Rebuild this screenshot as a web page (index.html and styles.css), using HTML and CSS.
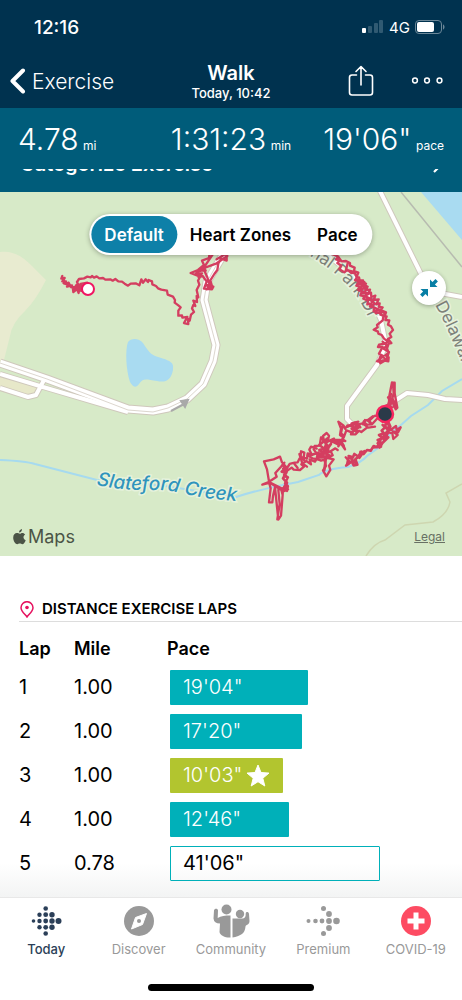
FILE: index.html
```html
<!DOCTYPE html>
<html lang="en">
<head>
    <meta charset="UTF-8">
    <meta name="viewport" content="width=device-width, initial-scale=1.0">
    <title>Exercise - Walk</title>
    <link rel="stylesheet" href="styles.css">
</head>
<body>
    <header class="top">
        <div class="status-bar">
            <span class="time">12:16</span>
            <div class="status-icons">
                <svg width="22" height="14" viewBox="0 0 22 14" aria-hidden="true">
                    <rect x="0" y="8" width="4" height="5" rx="1" fill="#fff"/>
                    <rect x="6" y="6" width="4" height="7" rx="1" fill="#305a72"/>
                    <rect x="12" y="3" width="4" height="10" rx="1" fill="#305a72"/>
                    <rect x="17" y="0" width="4" height="13" rx="1" fill="#305a72"/>
                </svg>
                <span>4G</span>
                <svg width="30" height="14" viewBox="0 0 30 14" aria-hidden="true">
                    <rect x="0.5" y="0.5" width="26" height="13" rx="3.5" fill="none" stroke="#6b8798"/>
                    <rect x="2" y="2" width="17" height="10" rx="2" fill="#fff"/>
                    <path d="M28 4.5c2 .6 2 4.400 0 5z" fill="#6b8798"/>
                </svg>
            </div>
        </div>
        <div class="nav-bar">
            <a class="back" href="#">
                <svg width="16" height="26" viewBox="0 0 16 26" aria-hidden="true"><path d="M13 2.500L2.500 13 13 23.500" fill="none" stroke="#fff" stroke-width="4" stroke-linecap="round" stroke-linejoin="round"/></svg>
                Exercise
            </a>
            <div class="title">
                <h1>Walk</h1>
                <p>Today, 10:42</p>
            </div>
            <div class="actions">
                <button type="button" aria-label="Share">
                    <svg width="26" height="32" viewBox="0 0 26 32"><g fill="none" stroke="#fff" stroke-width="1.600" stroke-linecap="round" stroke-linejoin="round"><path d="M8.500 10H4a2.500 2.500 0 0 0-2.500 2.500v15A2.500 2.500 0 0 0 4 30h18a2.500 2.500 0 0 0 2.500-2.500v-15A2.500 2.500 0 0 0 22 10h-4.500M13 20V2M8 6.500L13 1.500l5 5"/></g></svg>
                </button>
                <button type="button" aria-label="More">
                    <svg width="32" height="8" viewBox="0 0 32 8"><g fill="none" stroke="#fff" stroke-width="1.500"><circle cx="4" cy="3.500" r="2.400"/><circle cx="16" cy="3.500" r="2.400"/><circle cx="28.500" cy="3.500" r="2.400"/></g></svg>
                </button>
            </div>
        </div>
    </header>

    <section class="stats">
        <p>4.78 <small>mi</small></p>
        <p>1:31:23 <small>min</small></p>
        <p>19'06" <small>pace</small></p>
    </section>

    <main>
        <!-- scrolled under the stats bar -->
        <a class="categorize" href="#">
            <span>Categorize Exercise</span>
            <svg width="10" height="16" viewBox="0 0 10 16" aria-hidden="true"><path d="M2 2l6 6-6 6" fill="none" stroke="#fff" stroke-width="2.200"/></svg>
        </a>

        <section class="map">
            <svg class="map-canvas" viewBox="0 0 462 364" preserveAspectRatio="xMidYMid slice" role="img" aria-label="Route map">
                <defs>
                    <path id="creek-label" d="M96 293C140 302 155 295 176 300S215 308 250 310"/>
                    <path id="park-label" d="M272 44Q338 74 359 108T383 184"/>
                    <path id="delaware-label" d="M435 113Q448 134 478 212"/>
                </defs>
                <g transform="translate(0 -192)">
                    <!-- land -->
                    <path d="M0 252C14 250 24 258 32 266L46 280Q36 300 25 311 12 323 10 336L4 360 0 362z" fill="#e8ebd0"/>
                    <path d="M0 372L43 386 36 395 28 397 0 388z" fill="#e7e8c9"/>
                    <path d="M366 556Q374 543 385 540L405 525 433 522Q448 514 450 502L446 493 462 484" fill="none" stroke="#ced6b0" stroke-width="1.500"/>
                    <!-- water -->
                    <path d="M421 192L462 240V192z" fill="#a9dbf1"/>
                    <path d="M128 342C131 338 139 338 143 343 150 354 152 355 158 357 172 361 174 363 173 370 171 380 166 383 157 381 145 379 143 378 139 384 136 388 134 388 130 382 126 370 125 350 128 342z" fill="#a9dbf1"/>
                    <path d="M0 460Q25 461 35 464L97 480 165 486 236 497Q264 488 298 482L319 475Q325 469 348 467 361 463 367 456L378 448Q390 432 401 425L411 416 428 405 442 391 462 379" fill="none" stroke="#a6daef" stroke-width="2"/>
                    <path d="M401 192L462 267" fill="none" stroke="#b7bbb0" stroke-width="1.500"/>
                    <!-- roads -->
                    <g fill="none" stroke="#cfc8bc" stroke-linejoin="round">
                        <path d="M0 363L47 379 128 409 153 411 168 408 187 399 203 384 213 361 216 345 204 300 207 282 226 250" stroke-width="9"/>
                        <path d="M0 374L43 387 128 412M0 388L28 397 36 395 44 380" stroke-width="6"/>
                        <path d="M379 189L422 276M440 293L462 297M320 250Q365 280 381 320L386 345 377 365 347 406 347 419 354 426M390 404L407 393 428 395 445 399 464 400" stroke-width="6"/>
                    </g>
                    <g fill="none" stroke="#fff" stroke-linejoin="round">
                        <path d="M0 363L47 379 128 409 153 411 168 408 187 399 203 384 213 361 216 345 204 300 207 282 226 250" stroke-width="7"/>
                        <path d="M0 374L43 387 128 412M0 388L28 397 36 395 44 380" stroke-width="4"/>
                        <path d="M379 189L422 276M440 293L462 297M320 250Q365 280 381 320L386 345 377 365 347 406 347 419 354 426M390 404L407 393 428 395 445 399 464 400" stroke-width="4"/>
                    </g>
                    <path d="M0 363L47 379 128 410 153 412 168 408 187 399 203 384 213 361 216 345 204 300 207 282 222 255" fill="none" stroke="#dcd6ce"/>
                    <path d="M171 411L184 404M181 401L188 400 185 407z" fill="#a9a9a9" stroke="#a9a9a9" stroke-width="2"/>
                </g>

                <g class="map-label">
                    <text class="creek"><textPath href="#creek-label">Slateford Creek</textPath></text>
                    <text class="road"><textPath href="#park-label">National Park Dr</textPath></text>
                    <text class="road"><textPath href="#delaware-label">Delaware</textPath></text>
                </g>

                <!-- walked route, drawn at three units per map unit -->
                <g class="route" transform="scale(.33333)">
                    <path transform="translate(0 -6)" d="M187 258L184 266 194 264 187 274 198 274 191 280 204 282 201 290 216 286 214 292 226 291 219 298 220 306 231 297 236 309 237 290 229 294 243 285 238 301 252 304 246 288 235 284 231 276 237 267 252 265 262 260 272 262 276 258 282 263 290 259 298 265 309 264 316 269 331 268 338 272 346 267 355 274 366 275 374 281 384 287 392 281 407 280 418 286 424 268 429 278 437 268 444 276 446 270 456 274 457 283 468 288 474 295 484 299 501 302 503 314 519 320 525 330 524 338 536 347 542 352 535 362 535 377 546 376 547 383 562 381 552 399 565 402 564 386 569 392 573 374 582 366 576 355 580 345 586 348 580 332 591 336 590 318 595 322 590 300 598 284 594 272 600 260 572 249 594 240 612 225 606 212 627 204 630 180M572 249L650 220 682 198 660 180M645 183L612 232 617 242 596 240 588 252 606 250 596 262 608 258 620 275 612 296 636 298 640 290 626 293 620 285 636 288 631 271 643 252 652 240 655 220 664 206 680 212 680 190 650 208M590 246L612 240 622 262 630 288 620 298M242 282L262 278 270 290M204 280L222 296 230 284 246 300M190 268L196 282 206 278 212 290"/>
                    <path transform="translate(693 -6)" d="M303 192L322 200 315 208 326 212 319 219 331 227 325 238 340 247 349 239 361 249 371 248 378 263 372 270 384 275 376 287 386 291 381 299 393 303 388 316 401 319 397 326 411 332 409 343 421 340 417 350 429 353 428 364 438 362 434 369 449 368 441 358 453 363 448 374 458 377 455 391 438 405 440 412 428 419 441 425 442 431 452 435 459 446 471 455 460 461 444 464 441 471 455 471 444 491 457 498 438 514 447 510 448 520 461 512 472 514 473 502 463 496 473 488 468 475 473 461 481 459 471 447 481 441 476 431 486 420 480 409 471 404 475 391 463 390 467 379 459 377 465 367 449 360 455 352 444 351 446 340 436 343 443 328 428 330 433 317 421 321 420 308 412 310 417 299 403 300 410 290 398 291 405 281 394 283 396 271 386 271 384 262 376 263 382 248 369 243 371 233 357 227 357 219 345 213 332 214 323 202M380 270L399 285 379 281 408 290 385 302 400 276 405 302 390 310 417 309 402 318 426 330 403 319 431 340 422 349 448 361 433 355 464 371 456 384M350 220L345 240 366 245M455 455L468 466 458 476 474 486 466 510 450 495 442 515 470 508"/>
                    <path transform="translate(693 534)" d="M483 37L491 38 491 70 499 113 494 118 480 88 474 96 475 78 483 37M486 42L488 70 478 108 484 85 496 110M480 72L470 110 478 100M471 82L480 100 465 107 484 112 462 120M452 135L430 138 415 152 421 161 408 150 398 155 407 164 423 163 438 146 452 144M432 170L412 173 395 160 381 163 388 172 375 160 382 155 362 160 368 170 350 166 342 176 338 167 322 155 330 176 327 195 338 203 346 181 365 188 360 193 374 193 384 182 391 186 408 173M335 166L330 190 340 198 334 208 343 213 330 210 342 238 329 219 322 229 326 210 312 209 318 222 306 216 309 206 290 215 294 197 287 189 276 198 279 213 270 202 266 227 251 228 257 236 240 230 235 239 243 255 230 250 228 266 218 263 220 248 210 244 209 258 219 270 206 265 200 277 191 278 176 282 168 294 153 277 147 260 128 268 99 274 108 298 114 334 119 355 114 397 124 397 126 378 132 352 142 449 150 437 155 375 151 360 117 338 94 344 113 336 137 320 133 309 150 290 160 278M117 338L168 363 171 348 162 340 171 322 159 315 169 302 182 293 188 299 207 300 219 290 211 283 226 273 240 283 236 268 252 275 257 266 270 272 280 269 285 288 276 301 286 319 298 300 294 287 308 268 291 264 305 256 299 244 313 235 320 240M142 360L146 402 139 448M119 355L115 340M155 375L156 354 165 350 160 363 171 358"/>
                    <path transform="translate(693 534)" stroke-width="8" d="M350 170L372 158 378 186 362 176 386 170 360 188M262 258L285 240 265 225 290 205 280 240 300 222 272 260 298 258 265 240 292 232 276 208M292 235L285 268 268 250 298 245M300 215L316 214 328 216M240 255L262 248 258 262 275 262M285 262L280 300M155 286L164 294 152 305 166 308 156 325 168 338 160 350 167 358M166 300L157 296 165 320M353 262L348 285 362 274 368 286 379 284 373 268 382 260 370 252 366 262 353 258 372 278M384 256L392 245 398 252 408 240 419 242 428 228 438 232 448 215 440 210 455 205 444 195 459 190 452 182 462 172 466 155M455 165L472 180 460 195 472 202 455 218 446 233M470 152L478 170 470 190 459 210M474 175L460 170M440 220L456 200M426 232L450 230"/>
                    <path transform="translate(693 534)" d="M470 160L479 180 495 168 497 180 509 172 501 187 485 184 500 195 487 207 484 190 475 188M345 287L357 276 344 262M388 245L385 264 400 243M205 252L214 280 228 290M190 281L200 294M248 238L262 257M323 214L338 226M230 256L244 265 262 268M402 150L396 163M412 149L425 139"/>
                </g>
                <circle cx="88" cy="97" r="6" fill="#fff" stroke="#f01561" stroke-width="2"/>
                <circle cx="385" cy="222" r="8" fill="#2b3a49" stroke="#f8265f" stroke-width="2.500"/>
            </svg>

            <div class="segments">
                <button type="button" class="active">Default</button>
                <button type="button">Heart Zones</button>
                <button type="button">Pace</button>
            </div>
            <button type="button" class="shrink" aria-label="Shrink map">
                <svg width="18" height="18" viewBox="0 0 18 18"><path d="M10 .500V8h7.500l-2.600-2.600 3-3L15.500 0l-3 3zM8 17.500V10H.500l2.600 2.600-3 3L2.500 18l3-3z" fill="#087fa5"/></svg>
            </button>
            <div class="attribution">
                <span class="apple-maps">
                    <svg width="13" height="16" viewBox="0 0 13 16" aria-hidden="true"><path d="M9 0c.2 1.800-1.200 3.600-2.900 3.600C5.900 1.900 7.400.300 9 0zM9.300 4c1.200 0 2.200.600 2.800 1.500-2.400 1.500-2 4.700.6 5.700-.7 1.900-2 4-3.400 4-.9 0-1.300-.600-2.500-.600s-1.600.6-2.500.6C2.400 15.200.200 11.700.200 8.700.200 5.700 2 4.100 3.900 4.100c1.200 0 2 .700 2.900.700.800 0 1.400-.8 2.500-.8z" fill="#4b5446"/></svg>Maps
                </span>
                <a href="#">Legal</a>
            </div>
        </section>

        <section class="laps">
            <h2>
                <svg width="14" height="17" viewBox="0 0 14 17" aria-hidden="true"><path d="M7 16C4 12.300 1 9.800 1 6.700a6 6 0 0 1 12 0C13 9.800 10 12.300 7 16z" fill="none" stroke="#e6125f" stroke-width="1.500"/><circle cx="7" cy="6.500" r="1.800" fill="#e6125f"/></svg>
                DISTANCE EXERCISE LAPS
            </h2>
            <table>
                <thead>
                    <tr><th class="lap">Lap</th><th class="mile">Mile</th><th>Pace</th></tr>
                </thead>
                <tbody>
                    <tr><td>1</td><td>1.00</td><td><div class="bar" style="width: 50%">19'04"</div></td></tr>
                    <tr><td>2</td><td>1.00</td><td><div class="bar" style="width: 48%">17'20"</div></td></tr>
                    <tr><td>3</td><td>1.00</td><td><div class="bar best" style="width: 41%">10'03"
                        <svg width="24" height="23" viewBox="0 0 24 23" aria-hidden="true"><path d="M12 1l3 7.500 8 .600-6.200 5.100 2 7.800L12 17.700 5.200 22l2-7.800L1 9.100l8-.6z" fill="#fff" stroke="#fff" stroke-linejoin="round"/></svg>
                    </div></td></tr>
                    <tr><td>4</td><td>1.00</td><td><div class="bar" style="width: 43%">12'46"</div></td></tr>
                    <tr><td>5</td><td>0.78</td><td><div class="bar partial" style="width: 76%">41'06"</div></td></tr>
                </tbody>
            </table>
        </section>
    </main>

    <footer class="bottom">
        <nav class="tabs">
            <a class="current" href="#">
                <svg width="32" height="32" viewBox="0 0 32 32" fill="#2b3f58" aria-hidden="true">
                    <circle cx="3.500" cy="16" r="1.800"/>
                    <circle cx="9.500" cy="9.700" r="2.200"/><circle cx="9.500" cy="16" r="2.200"/><circle cx="9.500" cy="22.300" r="2.200"/>
                    <circle cx="15.700" cy="3.500" r="2.300"/><circle cx="15.700" cy="9.700" r="2.400"/><circle cx="15.700" cy="16" r="2.400"/><circle cx="15.700" cy="22.300" r="2.400"/><circle cx="15.700" cy="28.500" r="2.300"/>
                    <circle cx="22" cy="9.700" r="2.700"/><circle cx="22" cy="16" r="2.700"/><circle cx="22" cy="22.300" r="2.700"/>
                    <circle cx="28.500" cy="16" r="3"/>
                </svg>
                Today
            </a>
            <a href="#">
                <svg width="32" height="32" viewBox="0 0 32 32" aria-hidden="true"><circle cx="16" cy="16" r="15" fill="#999"/><path d="M23.500 8.500l-4 11-11 4.500 4-11.500z" fill="#fff" stroke="#fff" stroke-linejoin="round"/><circle cx="16" cy="16" r="2" fill="#999"/></svg>
                Discover
            </a>
            <a href="#">
                <svg width="38" height="34" viewBox="0 0 38 34" fill="#999" aria-hidden="true"><circle cx="14.500" cy="5.500" r="5"/><path d="M1.500 14.500L2 6.500C2.300 4 6 4 6 6.500L5.700 14C9 11.800 13 11.500 18.500 11.500V33.500C14 34 8 31.500 7.500 28L8 19.500Q2 19.500 1.500 14.500z"/><circle cx="28" cy="10" r="4.200"/><path d="M20.500 14.500H29.500Q34 15 33.700 9.500C34 7.500 36.700 7.500 37 10L37.500 17C37.500 21 34 20.500 33.500 22.500 33 30 28 32 20.500 33.500z"/></svg>
                Community
            </a>
            <a href="#">
                <svg width="34" height="32" viewBox="0 0 34 32" fill="#999" aria-hidden="true">
                    <circle cx="2.500" cy="16" r="2"/><circle cx="9.500" cy="16" r="2.300"/><circle cx="16" cy="16" r="2.400"/>
                    <circle cx="17.500" cy="3.500" r="2.500"/><circle cx="17.500" cy="28.500" r="2.500"/>
                    <circle cx="23" cy="9" r="2.900"/><circle cx="23" cy="16" r="2.900"/><circle cx="23" cy="23" r="2.900"/>
                    <circle cx="30.500" cy="16" r="3.300"/>
                </svg>
                Premium
            </a>
            <a href="#">
                <svg width="32" height="32" viewBox="0 0 32 32" aria-hidden="true"><circle cx="16" cy="16" r="15" fill="#fd4b62"/><path d="M13.500 7.500h5v6h6v5h-6v6h-5v-6h-6v-5h6z" fill="#fff"/></svg>
                COVID-19
            </a>
        </nav>
        <div class="home-indicator"></div>
    </footer>
</body>
</html>
```

FILE: styles.css
```css
* {
    box-sizing: border-box;
}

body {
    margin: 0;
    min-height: 100vh;
    display: flex;
    flex-direction: column;
    font-family: Inter, "Liberation Sans", sans-serif;
    color: #000;
    background: #fff;
}

h1, h2, p {
    margin: 0;
}

a {
    color: inherit;
    text-decoration: none;
}

button {
    border: 0;
    padding: 0;
    background: none;
    color: inherit;
    font: inherit;
}

svg {
    display: block;
    flex-shrink: 0;
}

/* header */
.top {
    background: #00324f;
    color: #fff;
}

.status-bar {
    height: 54px;
    padding: 0 17px 0 34px;
    display: flex;
    justify-content: space-between;
    align-items: center;
}

.time {
    font-size: 19px;
    font-weight: 500;
}

.status-icons {
    display: flex;
    align-items: center;
    gap: 5px;
    font-size: 15px;
    font-weight: 400;
}

.nav-bar {
    height: 54px;
    padding: 0 19px 0 10px;
    display: grid;
    grid-template-columns: 1fr auto 1fr;
    align-items: center;
}

.back {
    display: flex;
    align-items: center;
    gap: 6px;
    font-size: 21px;
    font-weight: 300;
}

.title {
    padding-left: 9px;
    text-align: center;
}

.title h1 {
    font-size: 20px;
    font-weight: 600;
    line-height: 24px;
}

.title p {
    font-size: 13px;
    font-weight: 500;
    line-height: 16px;
}

.actions {
    display: flex;
    justify-content: flex-end;
    align-items: center;
    gap: 37px;
}

/* stats */
.stats {
    position: relative;
    z-index: 1;
    height: 61px;
    padding: 0 18px;
    display: grid;
    grid-template-columns: 1fr auto 1fr;
    align-items: center;
    background: #005c7a;
    color: #fff;
}

.stats p {
    font-size: 30px;
    font-weight: 300;
    white-space: nowrap;
}

.stats p:last-child {
    text-align: right;
}

.stats small {
    margin-left: -4px;
    font-size: 12px;
    font-weight: 400;
}

.categorize {
    height: 40px;
    margin-top: -17px;
    padding: 0 20px;
    display: flex;
    justify-content: space-between;
    align-items: flex-start;
    background: #005c7a;
    color: #fff;
    font-size: 20px;
    font-weight: 600;
    line-height: 24px;
}

.categorize svg {
    margin-top: 6px;
}

/* map */
.map {
    position: relative;
    background: #d7eac8;
}

.map-canvas {
    width: 100%;
    height: auto;
}

.map-label text {
    paint-order: stroke;
    stroke: #e6f2dc;
    stroke-width: 3px;
}

.creek {
    fill: #2f94bd;
    font-size: 19px;
    font-style: italic;
    font-weight: 500;
}

.road {
    fill: #7d8179;
    font-size: 17px;
}

.route {
    fill: none;
    stroke: #d43e60;
    stroke-width: 7px;
    stroke-linejoin: round;
    stroke-linecap: round;
}

.segments {
    position: absolute;
    top: 22px;
    left: 50%;
    transform: translateX(-50%);
    padding: 2px;
    display: flex;
    border-radius: 21px;
    background: #fff;
    box-shadow: 0 1px 5px rgba(0, 0, 0, 0.3);
    font-size: 17px;
    font-weight: 600;
    white-space: nowrap;
}

.segments button {
    height: 37px;
    padding: 0 13px;
    border-radius: 19px;
}

.segments .active {
    background: #0e80a8;
    color: #fff;
}

.shrink {
    position: absolute;
    top: 79px;
    right: 16px;
    width: 34px;
    height: 34px;
    display: flex;
    justify-content: center;
    align-items: center;
    border-radius: 50%;
    background: #fff;
    box-shadow: 0 1px 4px rgba(0, 0, 0, 0.3);
}

.attribution {
    position: absolute;
    right: 17px;
    bottom: 9px;
    left: 13px;
    display: flex;
    justify-content: space-between;
    align-items: center;
    color: #4b5446;
    font-size: 18px;
}

.apple-maps {
    display: flex;
    align-items: center;
    gap: 2px;
}

.attribution a {
    font-size: 12px;
    color: #687064;
    text-decoration: underline;
}

/* laps */
.laps {
    padding: 41px 0 12px 19px;
    background: linear-gradient(#fff 90%, #f3f4f4);
}

.laps h2 {
    display: flex;
    align-items: center;
    gap: 8px;
    padding-left: 1px;
    border-bottom: 1px solid #ddd;
    font-size: 15px;
    font-weight: 600;
    line-height: 24px;
}

table {
    width: 100%;
    margin-top: 9px;
    border-collapse: collapse;
    table-layout: fixed;
}

th {
    height: 34px;
    padding: 0;
    text-align: left;
    font-size: 18px;
    font-weight: 600;
}

.lap {
    width: 55px;
}

.mile {
    width: 93px;
}

td {
    height: 44px;
    padding: 0;
    font-size: 20px;
}

td:last-child {
    padding: 0 16px 0 3px;
}

.bar {
    height: 35px;
    padding: 0 13px;
    display: flex;
    align-items: center;
    gap: 4px;
    border-radius: 1px;
    background: #00b0b9;
    color: #fff;
    font-weight: 300;
    white-space: nowrap;
}

.bar.best {
    background: #b2c52f;
}

.bar.partial {
    padding: 0 12px;
    border: 1px solid #00b0b9;
    background: none;
    color: #000;
    font-weight: 400;
}

/* bottom tabs */
.bottom {
    margin-top: auto;
    padding-bottom: 9px;
    border-top: 1px solid #e8e8e8;
    background: #fff;
}

.tabs {
    display: grid;
    grid-template-columns: repeat(5, 1fr);
    padding-top: 5px;
}

.tabs a {
    display: flex;
    flex-direction: column;
    align-items: center;
    color: #999;
    font-size: 13px;
    line-height: 20px;
}

.tabs svg {
    height: 36px;
}

.tabs .current {
    color: #2b3f58;
    font-weight: 500;
}

.home-indicator {
    width: 36%;
    height: 7px;
    margin: 25px auto 0;
    border-radius: 4px;
    background: #000;
}
```
